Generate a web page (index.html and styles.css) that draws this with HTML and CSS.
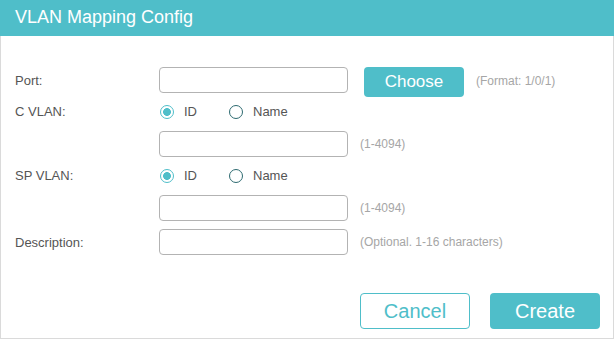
FILE: index.html
```html
<!DOCTYPE html>
<html lang="en">
<head>
    <meta charset="UTF-8">
    <title>VLAN Mapping Config</title>
    <link rel="stylesheet" href="styles.css">
</head>
<body>
    <div class="dialog">
        <!-- Title bar -->
        <header class="dialog-header">VLAN Mapping Config</header>

        <div class="dialog-body">
            <form class="config-form">
                <div class="form-row">
                    <label class="row-label" for="port">Port:</label>
                    <input type="text" id="port" class="text-input">
                    <button type="button" class="btn btn-choose">Choose</button>
                    <span class="hint hint-format">(Format: 1/0/1)</span>
                </div>

                <div class="form-row radio-row">
                    <span class="row-label">C VLAN:</span>
                    <label class="radio-item"><input type="radio" name="cvlan" checked> ID</label>
                    <label class="radio-item"><input type="radio" name="cvlan"> Name</label>
                </div>
                <div class="form-row">
                    <span class="row-label"></span>
                    <input type="text" class="text-input">
                    <span class="hint">(1-4094)</span>
                </div>

                <div class="form-row radio-row">
                    <span class="row-label">SP VLAN:</span>
                    <label class="radio-item"><input type="radio" name="spvlan" checked> ID</label>
                    <label class="radio-item"><input type="radio" name="spvlan"> Name</label>
                </div>
                <div class="form-row">
                    <span class="row-label"></span>
                    <input type="text" class="text-input">
                    <span class="hint">(1-4094)</span>
                </div>

                <div class="form-row">
                    <label class="row-label" for="desc">Description:</label>
                    <input type="text" id="desc" class="text-input">
                    <span class="hint">(Optional. 1-16 characters)</span>
                </div>
            </form>

            <!-- Footer buttons -->
            <div class="dialog-footer">
                <button type="button" class="btn btn-outline">Cancel</button>
                <button type="button" class="btn btn-primary">Create</button>
            </div>
        </div>
    </div>
</body>
</html>
```

FILE: styles.css
```css
/* Reset */
* {
    box-sizing: border-box;
    margin: 0;
    padding: 0;
}

body {
    font-family: 'Liberation Sans', Arial, sans-serif;
    background-color: #ffffff;
    color: #555555;
}

/* Dialog frame */
.dialog {
    width: 614px;
    height: 339px;
    display: flex;
    flex-direction: column;
}

.dialog-header {
    height: 36px;
    line-height: 34px;
    padding-left: 15px;
    background-color: #4fbec9;
    color: #ffffff;
    font-size: 18px;
}

.dialog-body {
    flex: 1;
    border: 1px solid #dadada;
    border-top: none;
    padding-top: 31px;
}

/* Form rows */
.config-form {
    display: flex;
    flex-direction: column;
    gap: 8px;
}

.form-row {
    display: flex;
    align-items: center;
    height: 26px;
    font-size: 13px;
}

.radio-row {
    height: 22px;
    padding-bottom: 1px;
}

.row-label {
    width: 158px;
    padding-left: 14px;
    color: #555555;
}

.text-input {
    width: 189px;
    height: 26px;
    border: 1px solid #b3b3b3;
    border-radius: 4px;
    font-family: inherit;
    font-size: 13px;
    padding: 0 8px;
    outline: none;
}

.hint {
    margin-left: 12px;
    font-size: 12px;
    color: #a6a6a6;
}

.hint-format {
    margin-left: 12px;
    margin-top: 2px;
}

/* Radio buttons */
.radio-item {
    display: flex;
    align-items: center;
    gap: 10px;
    margin-left: 1px;
    margin-right: 31px;
    color: #555555;
}

.radio-item input {
    appearance: none;
    -webkit-appearance: none;
    width: 14px;
    height: 14px;
    border: 1.5px solid #2d6a70;
    border-radius: 50%;
    background-color: #ffffff;
}

.radio-item input:checked {
    border-color: #4fbec9;
    background: radial-gradient(circle, #4fbec9 0 3.6px, #ffffff 4.2px);
}

/* Buttons */
.btn {
    font-family: inherit;
    border-radius: 4px;
    cursor: pointer;
}

.btn-choose {
    align-self: flex-start;
    flex-shrink: 0;
    width: 100px;
    height: 30px;
    margin-left: 16px;
    margin-bottom: -4px;
    border: none;
    background-color: #4fbec9;
    color: #ffffff;
    font-size: 17px;
}

.dialog-footer {
    display: flex;
    justify-content: flex-end;
    gap: 20px;
    margin-top: 38px;
    padding-right: 13px;
}

.btn-outline,
.btn-primary {
    width: 110px;
    height: 36px;
    font-size: 20px;
}

.btn-outline {
    background-color: #ffffff;
    border: 1px solid #4fbec9;
    color: #4fbec9;
}

.btn-primary {
    background-color: #4fbec9;
    border: none;
    color: #ffffff;
}
```
